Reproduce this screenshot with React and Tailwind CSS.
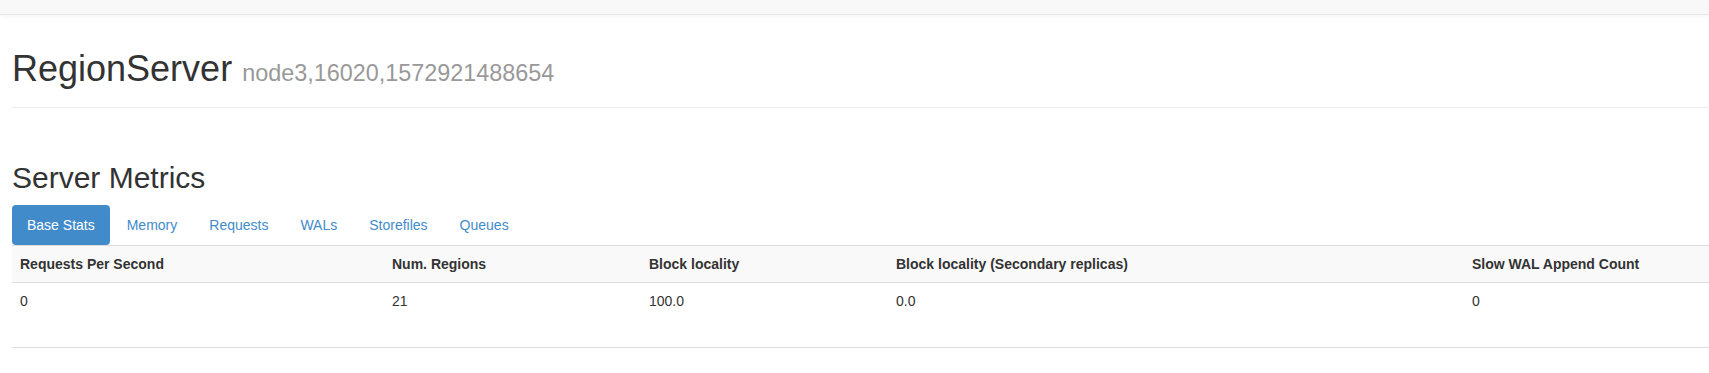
import React from 'react';

const tabs = ['Base Stats', 'Memory', 'Requests', 'WALs', 'Storefiles', 'Queues'];

const columns = [
  { label: 'Requests Per Second', value: '0', width: 'w-[372px]' },
  { label: 'Num. Regions', value: '21', width: 'w-[257px]' },
  { label: 'Block locality', value: '100.0', width: 'w-[247px]' },
  { label: 'Block locality (Secondary replicas)', value: '0.0', width: 'w-[576px]' },
  { label: 'Slow WAL Append Count', value: '0', width: '' },
];

function App() {
  return (
    <div className="min-h-screen bg-white text-[#333] font-['Liberation_Sans',Arial,sans-serif] text-[14px] overflow-hidden">
      {/* Navbar (cut off at the top) */}
      <div className="h-[15px] bg-[#f8f8f8] border-b border-[#e7e7e7] shadow-[0_1px_6px_rgba(0,0,0,0.05)]"></div>

      <div className="pl-[12px]">
        {/* Page header */}
        <div className="mt-[34px] pb-[9px] border-b border-[#eee]">
          <h1 className="text-[36px] leading-[39px] mb-[10px] font-normal">
            RegionServer{' '}
            <small className="text-[23.4px] leading-none text-[#999]">node3,16020,1572921488654</small>
          </h1>
        </div>

        {/* Server Metrics */}
        <h2 className="mt-[53px] mb-[11px] text-[30px] leading-[33px] font-normal">Server Metrics</h2>

        <ul className="flex gap-[2px]">
          {tabs.map((tab, index) => (
            <li key={tab}>
              <a
                className={`block px-[15px] py-[10px] leading-[20px] rounded-[4px] ${
                  index === 0 ? 'bg-[#428bca] text-white' : 'text-[#428bca]'
                }`}
              >
                {tab}
              </a>
            </li>
          ))}
        </ul>

        <table className="w-[1697px] border-collapse table-fixed">
          <thead>
            <tr className="bg-[#f9f9f9] border-t border-b border-[#ddd]">
              {columns.map((col) => (
                <th key={col.label} className={`${col.width} p-[8px] leading-[20px] text-left font-bold`}>
                  {col.label}
                </th>
              ))}
            </tr>
          </thead>
          <tbody>
            <tr className="border-b border-[#ddd]">
              {columns.map((col) => (
                <td key={col.label} className="px-[8px] pt-[8px] pb-[36px] leading-[20px] align-top">
                  {col.value}
                </td>
              ))}
            </tr>
          </tbody>
        </table>
      </div>
    </div>
  );
}

export default App;
